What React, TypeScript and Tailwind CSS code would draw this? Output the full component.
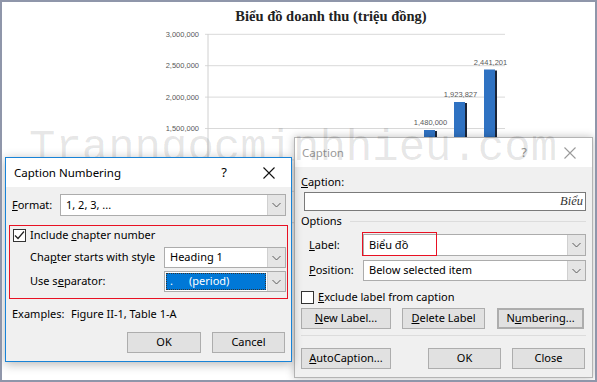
import React from "react";

const Chevron: React.FC = () => (
  <svg width="9" height="6" viewBox="0 0 9 6">
    <path d="M0.5 1 L4.5 5 L8.5 1" fill="none" stroke="#5a5a5a" strokeWidth="1" />
  </svg>
);

const CloseX: React.FC<{ color: string }> = ({ color }) => (
  <svg width="12" height="12" viewBox="0 0 12 12">
    <path d="M0.5 0.5 L11.5 11.5 M11.5 0.5 L0.5 11.5" stroke={color} strokeWidth="1.1" />
  </svg>
);

const Checkbox: React.FC<{ checked?: boolean }> = ({ checked }) => (
  <div className="w-[13px] h-[13px] shrink-0 border border-[#333] bg-white flex items-center justify-center">
    {checked && (
      <svg width="11" height="11" viewBox="0 0 11 11">
        <path d="M1 5.5 L4 8.5 L10 1.5" fill="none" stroke="#222" strokeWidth="1.2" />
      </svg>
    )}
  </div>
);

interface SelectProps {
  value: React.ReactNode;
  className?: string;
  highlight?: boolean;
}

const Select: React.FC<SelectProps> = ({ value, className = "", highlight }) => (
  <div className={`flex border border-[#acacac] bg-white ${className}`}>
    <div className="flex-1 flex items-center min-w-0">
      {highlight ? (
        <div className="mx-[1px] h-[17px] w-full bg-[#0078d7] text-white border border-dotted border-[#333] flex items-center pl-[3px]">
          {value}
        </div>
      ) : (
        <span className="pl-[5px] whitespace-nowrap">{value}</span>
      )}
    </div>
    <div className="w-[18px] shrink-0 border-l border-[#d0d0d0] bg-[#e5e5e5] flex items-center justify-center">
      <Chevron />
    </div>
  </div>
);

const Button: React.FC<{ children: React.ReactNode; className?: string }> = ({ children, className = "" }) => (
  <div className={`h-[21px] flex items-center justify-center bg-[#e1e1e1] border border-[#adadad] ${className}`}>
    {children}
  </div>
);

const gridYs = [34.3, 65.7, 97.1, 128.5, 159.9, 191.3, 222.7];
const axisLabels = ["3,000,000", "2,500,000", "2,000,000", "1,500,000"];
const bars = [
  { x: 424, top: 130, label: "1,480,000", ly: 124.5 },
  { x: 454, top: 102, label: "1,923,827", ly: 96.5 },
  { x: 484, top: 69.5, label: "2,441,201", ly: 64.5 },
];

const Chart: React.FC = () => (
  <>
    <div className="h-[26px] pt-[4px] pl-[65px] flex justify-center font-['Liberation_Serif',serif] font-bold text-[14.5px] leading-[20px] text-[#222]">
      Biểu đồ doanh thu (triệu đồng)
    </div>
    <svg width="593" height="352" viewBox="2 28 593 352" className="block">
      {gridYs.map((y) => (
        <line key={y} x1="205" x2="505" y1={y} y2={y} stroke="#d9d9d9" strokeWidth="1" />
      ))}
      <line x1="208" x2="208" y1="34" y2="223" stroke="#d0d0d0" strokeWidth="1" />
      {axisLabels.map((t, i) => (
        <text
          key={t}
          x="199"
          y={gridYs[i] + 2.6}
          textAnchor="end"
          fontSize="7.5"
          fill="#595959"
          fontFamily="Liberation Sans, sans-serif"
        >
          {t}
        </text>
      ))}
      {bars.map((b) => (
        <g key={b.label}>
          <rect x={b.x} y={b.top} width="11" height={222.7 - b.top} fill="#2f72c2" />
          <rect x={b.x + 11} y={b.top + 1} width="2" height={221.7 - b.top} fill="#1b2436" />
          <text
            x={b.x + 6.5}
            y={b.ly}
            textAnchor="middle"
            fontSize="7.5"
            fill="#595959"
            fontFamily="Liberation Sans, sans-serif"
          >
            {b.label}
          </text>
        </g>
      ))}
    </svg>
  </>
);

const CaptionNumbering: React.FC = () => (
  <div className="absolute left-[3px] top-[155px] z-30 w-[287px] h-[205px] border border-[#1883d7] bg-[#f0f0f0] shadow-[0_2px_10px_rgba(0,0,0,0.3)] text-[11px] text-black whitespace-nowrap">
    <div className="h-[29px] bg-white flex items-center pl-[8px] text-[11.5px]">
      <span className="flex-1">Caption Numbering</span>
      <span className="w-[12px] text-center mr-[33px] text-[13px]">?</span>
      <span className="mr-[16px] flex">
        <CloseX color="#111" />
      </span>
    </div>
    <div className="pl-[6px] pr-[5px]">
      <div className="mt-[7px] flex items-center h-[22px]">
        <span className="w-[48px]">
          <u>F</u>ormat:
        </span>
        <Select value="1, 2, 3, ..." className="flex-1 h-[22px]" />
      </div>
      <div className="mt-[9px] -ml-[3px] -mr-[2px] h-[74px] border border-[#e81123] pl-[3px] pr-[1px]">
        <div className="mt-[1px] flex items-center h-[16px] gap-[4px]">
          <Checkbox checked />
          <span>
            Include <u>c</u>hapter number
          </span>
        </div>
        <div className="mt-[4px] flex items-center h-[21px] pl-[17px]">
          <span className="flex-1">
            Cha<u>p</u>ter starts with style
          </span>
          <Select value="Heading 1" className="w-[122px] h-[21px]" />
        </div>
        <div className="mt-[3px] flex items-center h-[21px] pl-[17px]">
          <span className="flex-1">
            Use s<u>e</u>parator:
          </span>
          <Select
            highlight
            value={
              <>
                <span className="w-[19px]">.</span>
                <span>(period)</span>
              </>
            }
            className="w-[122px] h-[21px]"
          />
        </div>
      </div>
      <div className="mt-[7px] h-[16px] flex items-center">
        <span className="w-[59px]">Examples:</span>
        <span>Figure II-1, Table 1-A</span>
      </div>
      <div className="mt-[10px] flex justify-end gap-[11px] pr-[1px]">
        <Button className="w-[74px] h-[20px]">OK</Button>
        <Button className="w-[73px] h-[20px]">Cancel</Button>
      </div>
    </div>
  </div>
);

const Caption: React.FC = () => (
  <div className="absolute left-[292px] top-[135px] z-10 w-[299px] h-[241px] border border-[#b4b4b4] bg-[#f0f0f0] shadow-[0_0_8px_rgba(0,0,0,0.25)] text-[11px] text-black whitespace-nowrap">
    <div className="h-[29px] bg-white flex items-center pl-[7px] text-[#9a9a9a] text-[11.5px]">
      <span className="flex-1">Caption</span>
      <span className="w-[12px] text-center mr-[34px] text-[13px]">?</span>
      <span className="mr-[16px] flex">
        <CloseX color="#9a9a9a" />
      </span>
    </div>
    <div className="px-[6px]">
      <div className="mt-[7px] h-[16px] flex items-center">
        <span>
          <u>C</u>aption:
        </span>
      </div>
      <div className="mt-[2px] ml-[3px] h-[19px] border border-[#7a7a7a] bg-white flex items-center justify-end pr-[2px] font-['Liberation_Serif',serif] italic text-[12.5px] text-[#333]">
        Biểu
      </div>
      <div className="mt-[2px] h-[16px] flex items-center gap-[8px]">
        <span>Options</span>
        <div className="flex-1 h-px bg-[#dcdcdc]" />
      </div>
      <div className="mt-[5px] flex items-center h-[22px]">
        <span className="w-[62px] pl-[8px]">
          <u>L</u>abel:
        </span>
        <div className="relative flex-1">
          <Select value="Biểu đồ" className="h-[22px]" />
          <div className="absolute left-[-1px] top-[-2px] w-[75px] h-[24px] border border-[#e81123]" />
        </div>
      </div>
      <div className="mt-[4px] flex items-center h-[21px]">
        <span className="w-[62px] pl-[8px]">
          <u>P</u>osition:
        </span>
        <Select value="Below selected item" className="flex-1 h-[21px]" />
      </div>
      <div className="mt-[8px] h-[16px] flex items-center gap-[4px]">
        <Checkbox />
        <span>
          <u>E</u>xclude label from caption
        </span>
      </div>
      <div className="mt-[3px] flex">
        <Button className="w-[90px]">
          <span>
            <u>N</u>ew Label...
          </span>
        </Button>
        <Button className="w-[83px] ml-[11px]">
          <span>
            <u>D</u>elete Label
          </span>
        </Button>
        <Button className="w-[87px] ml-[12px] border-2 border-[#0078d7]">
          <span>
            N<u>u</u>mbering...
          </span>
        </Button>
      </div>
      <div className="mt-[6px] h-px bg-[#dcdcdc]" />
      <div className="mt-[12px] flex pr-[1px]">
        <Button className="w-[90px]">
          <span>
            <u>A</u>utoCaption...
          </span>
        </Button>
        <Button className="w-[73px] ml-auto">OK</Button>
        <Button className="w-[73px] ml-[11px]">Close</Button>
      </div>
    </div>
  </div>
);

export default function App() {
  return (
    <div className="relative w-[597px] h-[382px] overflow-hidden bg-white border-2 border-[#8f96aa] font-['Noto_Sans',sans-serif]">
      <Chart />
      <Caption />
      <div className="absolute left-[27px] top-[124px] z-20 pointer-events-none font-['Liberation_Mono',monospace] text-[44px] leading-none text-black/10 whitespace-nowrap">
        Tranngocminhhieu.com
      </div>
      <CaptionNumbering />
    </div>
  );
}
